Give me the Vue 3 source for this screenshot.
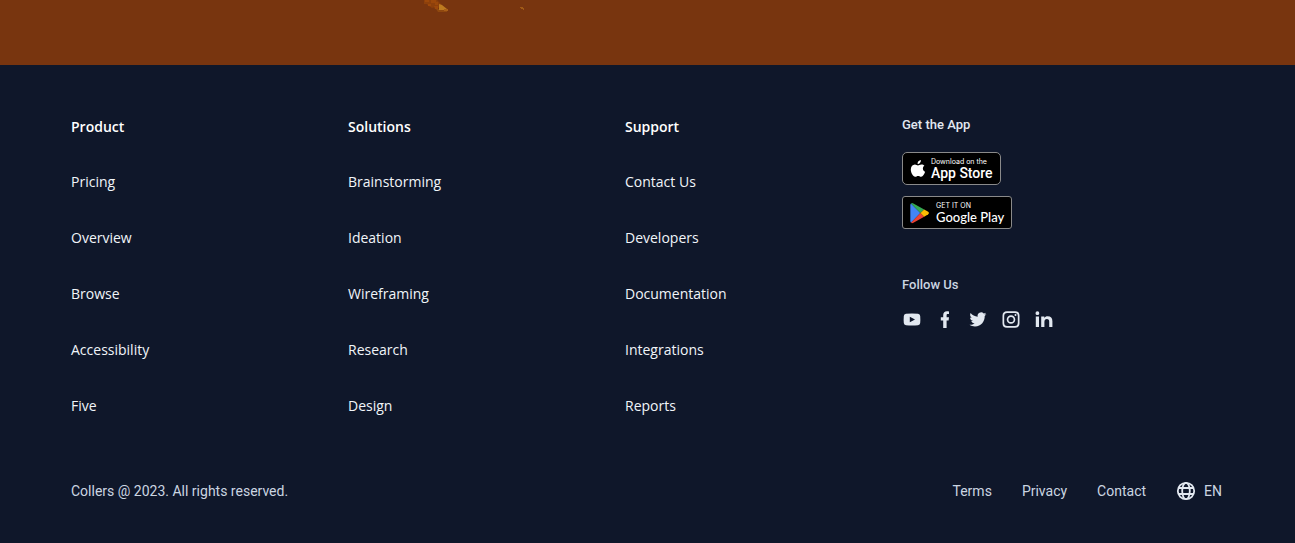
<script setup>
const columns = [
  { title: 'Product', links: ['Pricing', 'Overview', 'Browse', 'Accessibility', 'Five'] },
  { title: 'Solutions', links: ['Brainstorming', 'Ideation', 'Wireframing', 'Research', 'Design'] },
  { title: 'Support', links: ['Contact Us', 'Developers', 'Documentation', 'Integrations', 'Reports'] },
]
const legal = ['Terms', 'Privacy', 'Contact']
const socials = [
  { name: 'YouTube', d: 'M4 3.7Q10 3.1 16 3.7Q18.1 4 18.2 6Q18.5 9.5 18.2 13Q18.1 15 16 15.3Q10 15.9 4 15.3Q1.9 15 1.8 13Q1.5 9.5 1.8 6Q1.9 4 4 3.7ZM7.8 6.7V12.3L13 9.5Z' },
  { name: 'Facebook', d: 'M8.2 18V10.5H5.8V7.3H8.2V5.2C8.2 2.6 9.7 1.2 12 1.2C13 1.2 13.9 1.3 14 1.4V4.1H12.7C11.9 4.1 11.6 4.6 11.6 5.4V7.3H14L13.6 10.5H11.6V18Z' },
  { name: 'Twitter', d: 'M18.4 4.1C17.8 4.4 17.1 4.6 16.4 4.7C17.1 4.2 17.7 3.5 17.9 2.7C17.2 3.1 16.5 3.4 15.7 3.6A3.5 3.5 0 0 0 9.7 6.8C6.8 6.6 4.3 5.2 2.6 3.1C1.7 4.6 2.1 6.7 3.7 7.8C3.1 7.8 2.6 7.6 2.1 7.4C2.1 9.1 3.3 10.5 4.9 10.8C4.4 11 3.8 11 3.3 10.9C3.8 12.3 5.1 13.3 6.6 13.3C5.2 14.4 3.4 15 1.5 14.8C3.1 15.8 5 16.4 7 16.4C13.3 16.4 16.9 11 16.7 5.9C17.4 5.4 18 4.8 18.4 4.1Z' },
  { name: 'Instagram', d: 'M6 1.2H14Q18.5 1.2 18.5 5.7V13.3Q18.5 17.8 14 17.8H6Q1.5 17.8 1.5 13.3V5.7Q1.5 1.2 6 1.2ZM6.2 2.9Q3.2 2.9 3.2 5.9V13.1Q3.2 16.1 6.2 16.1H13.8Q16.8 16.1 16.8 13.1V5.9Q16.8 2.9 13.8 2.9ZM10 5.2A4.3 4.3 0 1 1 10 13.8A4.3 4.3 0 1 1 10 5.2ZM10 6.9A2.6 2.6 0 1 0 10 12.1A2.6 2.6 0 1 0 10 6.9ZM14.5 4A1 1 0 1 1 14.5 6A1 1 0 1 1 14.5 4Z' },
  { name: 'LinkedIn', d: 'M3.4 1.3A1.9 1.9 0 1 1 3.4 5.1A1.9 1.9 0 1 1 3.4 1.3ZM1.8 6.6H5V17H1.8ZM7.2 6.6H10.3V8C11 6.9 12.1 6.3 13.6 6.3C16.8 6.3 18.4 8 18.4 11.3V17H15.2V11.8C15.2 10 14.6 9 12.9 9C11.2 9 10.4 10.1 10.4 11.9V17H7.2Z' },
]
</script>

<template>
  <div class="page">
    <section class="hero" aria-hidden="true">
      <svg class="art" width="112" height="12" viewBox="0 0 112 12">
        <path fill="#8d400b" d="M4 0H17L22 5L19 8L15 7L12 8L9 6L7 4H4Z" />
        <path fill="#9c480b" d="M5 0H9V2H5ZM11 0H16V2H18V5H15V3H11ZM8 4H11V6H8ZM14 6H18V9H15Z" />
        <path fill="#8f480f" d="M16 9H22V12H18ZM22 10H27V12H22Z" />
        <path fill="#bd7b20" d="M19 4L22 5L27 9V10H19Z" />
        <path fill="#a95f18" d="M24 9H28V11H24Z" />
        <path fill="#a05a16" d="M100 7H103V8H104V10H103V9H101V8H100Z" />
      </svg>
    </section>

    <footer class="footer">
      <div class="grid">
        <nav v-for="col in columns" :key="col.title" :aria-label="col.title">
          <h2>{{ col.title }}</h2>
          <ul>
            <li v-for="link in col.links" :key="link"><a href="#">{{ link }}</a></li>
          </ul>
        </nav>

        <div class="apps">
          <h3>Get the App</h3>
          <a class="badge" href="#">
            <svg width="16" height="20" viewBox="0 0 16 20" aria-hidden="true">
              <path fill="#fff" d="M10.9 1C11.1 3.1 9.5 5.1 7.6 5C7.3 3.1 9 1.1 10.9 1ZM14.4 6.8C12.2 8.2 12.4 11.6 15.1 12.7C14.4 14.8 12.9 17.7 11.2 17.8C10 17.8 9.6 17 8.2 17C6.8 17 6.3 17.8 5.2 17.8C3.1 17.9 .8 13.6 .8 10.5C.8 7.4 2.7 5.6 4.9 5.5C6.2 5.5 7.2 6.4 8 6.4C8.8 6.4 10 5.4 11.6 5.5C12.7 5.5 13.7 6 14.4 6.8Z" />
            </svg>
            <span class="words"><small>Download on the</small><strong>App Store</strong></span>
          </a>
          <a class="badge google" href="#">
            <svg width="20" height="22" viewBox="0 0 20 22" aria-hidden="true">
              <path fill="#4285f4" d="M1 1.5Q.3 2 .3 3V19Q.3 20.3 1 20.8L10.4 11Z" />
              <path fill="#34a853" d="M1 1.5Q1.9 .5 3.4 1.4L14.2 7.5L10.4 11Z" />
              <path fill="#ea4335" d="M1 20.8Q1.9 21.7 3.4 20.8L14.2 14.7L10.4 11Z" />
              <path fill="#fbbc04" d="M14.2 7.5L18.2 9.8Q20 11.1 18.2 12.3L14.2 14.7L10.4 11Z" />
            </svg>
            <span class="words"><small>GET IT ON</small><strong>Google Play</strong></span>
          </a>

          <h3 class="follow">Follow Us</h3>
          <div class="socials">
            <a v-for="s in socials" :key="s.name" href="#" :aria-label="s.name">
              <svg width="20" height="20" viewBox="0 0 20 20"><path fill-rule="evenodd" fill="currentColor" :d="s.d" /></svg>
            </a>
          </div>
        </div>
      </div>

      <div class="bottom">
        <span>Collers @ 2023. All rights reserved.</span>
        <div class="legal">
          <a v-for="item in legal" :key="item" href="#">{{ item }}</a>
          <button type="button" class="lang">
            <svg width="20" height="20" viewBox="0 0 20 20" fill="none" stroke="currentColor" stroke-width="1.8" aria-hidden="true">
              <circle cx="10" cy="10" r="8.2" />
              <ellipse cx="10" cy="10" rx="3.8" ry="8.2" />
              <path d="M2.3 7H17.7M2.3 13H17.7" />
            </svg>
            EN
          </button>
        </div>
      </div>
    </footer>
  </div>
</template>

<style>
body {
  margin: 0;
  background: #0f172a;
}
</style>

<style scoped>
.page {
  min-height: 100vh;
  display: flex;
  flex-direction: column;
  font-family: "Open Sans", "Noto Sans", sans-serif;
  font-size: 14px;
  line-height: 20px;
}
.hero {
  position: relative;
  height: 65px;
  background: #78350f;
}
.art {
  position: absolute;
  top: 0;
  left: 420px;
}
.footer {
  flex: 1;
  padding: 52px 73px 40px 71px;
  background: #0f172a;
  color: #e2e8f0;
}
a {
  color: inherit;
  text-decoration: none;
}
.grid {
  display: grid;
  grid-template-columns: repeat(3, minmax(0, 277fr)) minmax(0, 320fr);
}
h2 {
  margin: 0 0 35px;
  font-size: 14px;
  line-height: 20px;
  font-weight: 600;
  color: #fff;
}
ul {
  list-style: none;
  margin: 0;
  padding: 0;
  display: flex;
  flex-direction: column;
  gap: 36px;
  color: #f1f5f9;
}
.apps {
  display: flex;
  flex-direction: column;
  align-items: flex-start;
  font-family: Roboto, sans-serif;
}
h3 {
  margin: 0 0 19px;
  font-size: 13px;
  line-height: 16px;
  font-weight: 500;
  color: #e2e8f0;
}
.badge {
  box-sizing: border-box;
  height: 33px;
  display: flex;
  align-items: center;
  gap: 5px;
  padding: 0 7px;
  margin-bottom: 11px;
  border: 1px solid #8a8a8a;
  border-radius: 5px;
  background: #000;
  color: #fff;
  font-family: Inter, sans-serif;
}
.google {
  gap: 6px;
  border-radius: 3px;
}
.words {
  display: flex;
  flex-direction: column;
}
.words small {
  font-size: 7px;
  line-height: 8px;
}
.words strong {
  font-family: Roboto, sans-serif;
  font-size: 14px;
  line-height: 14px;
  font-weight: 500;
}
.google .words strong {
  font-family: Lato, sans-serif;
  font-size: 13px;
}
h3.follow {
  margin: 37px 0 17px;
  color: #cbd5e1;
}
.socials {
  display: flex;
  gap: 13px;
}
.socials a {
  display: flex;
}
.bottom {
  display: flex;
  justify-content: space-between;
  align-items: center;
  margin-top: 65px;
  font-family: Roboto, sans-serif;
  color: #cbd5e1;
}
.legal {
  display: flex;
  align-items: center;
  gap: 30px;
}
.lang {
  display: flex;
  align-items: center;
  gap: 8px;
  padding: 0;
  border: 0;
  background: none;
  color: inherit;
  font: inherit;
}
.lang svg {
  color: #e2e8f0;
}
</style>
